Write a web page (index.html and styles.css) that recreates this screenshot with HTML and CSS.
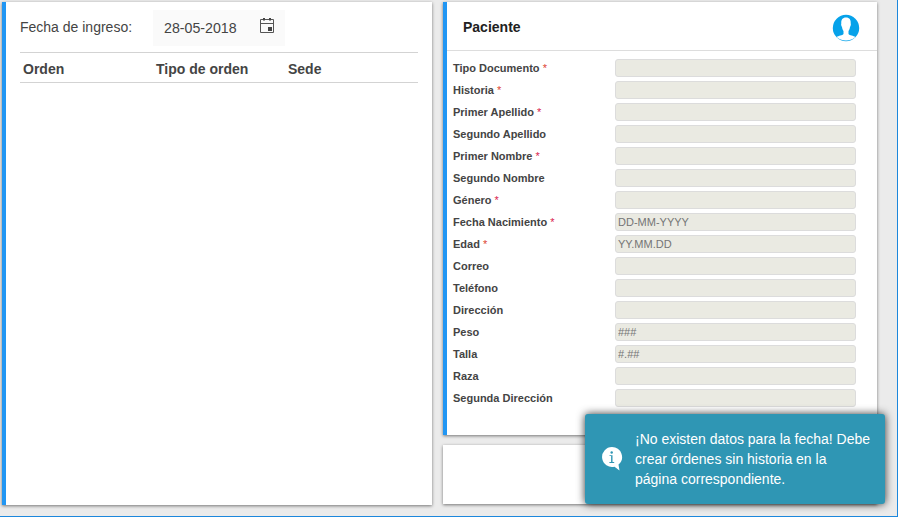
FILE: index.html
```html
<!DOCTYPE html>
<html lang="es">
<head>
<meta charset="utf-8">
<title>Ingreso de órdenes</title>
<link rel="stylesheet" href="styles.css">
</head>
<body>
<main class="app">
  <section class="card accent orders">
    <div class="filter">
      <span class="filter-label">Fecha de ingreso:</span>
      <div class="date">
        <span class="date-value">28-05-2018</span>
        <svg class="calendar" width="16" height="17" viewBox="0 0 16 17">
          <path d="M1.500 2.500h13v13h-13zM1 6.500h14" fill="none" stroke="#555" stroke-width="1"/>
          <path d="M4 1h2v2.500H4zM10 1h2v2.500h-2zM9 10h4v4H9z" fill="#444"/>
        </svg>
      </div>
    </div>
    <div class="table-head"><span>Orden</span><span>Tipo de orden</span><span>Sede</span></div>
  </section>
  <div class="side">
    <section class="card accent patient">
      <header class="patient-head">
        <h1>Paciente</h1>
        <svg width="28" height="28" viewBox="0 0 28 28">
          <circle cx="14" cy="14" r="13.200" fill="#06a2ea"/>
          <path d="M14 3.600C10.500 3.600 9 6 9.300 9.300C8.800 10.500 9.400 12.500 10 13C10.200 14.800 10.800 16 11.500 17V20C10.500 21.700 6.500 21.500 4.600 23C7 25.300 10 26.400 14 26.400S21 25.300 23.400 23C21.500 21.500 17.500 21.700 16.500 20V17C17.200 16 17.800 14.800 18 13C18.600 12.500 19.200 10.500 18.700 9.300C19 6 17.500 3.600 14 3.600Z" fill="#fff"/>
        </svg>
      </header>
      <div class="form">
        <div class="row"><label>Tipo Documento <i class="warm">*</i></label><input disabled></div>
        <div class="row"><label>Historia <i class="warm">*</i></label><input disabled></div>
        <div class="row"><label>Primer Apellido <i>*</i></label><input disabled></div>
        <div class="row"><label>Segundo Apellido</label><input disabled></div>
        <div class="row"><label>Primer Nombre <i>*</i></label><input disabled></div>
        <div class="row"><label>Segundo Nombre</label><input disabled></div>
        <div class="row"><label>Género <i>*</i></label><input disabled></div>
        <div class="row"><label>Fecha Nacimiento <i>*</i></label><input disabled placeholder="DD-MM-YYYY"></div>
        <div class="row"><label>Edad <i class="warm">*</i></label><input disabled placeholder="YY.MM.DD"></div>
        <div class="row"><label>Correo</label><input disabled></div>
        <div class="row"><label>Teléfono</label><input disabled></div>
        <div class="row"><label>Dirección</label><input disabled></div>
        <div class="row"><label>Peso</label><input disabled placeholder="###"></div>
        <div class="row"><label>Talla</label><input disabled placeholder="#.##"></div>
        <div class="row"><label>Raza</label><input disabled></div>
        <div class="row"><label>Segunda Dirección</label><input disabled></div>
      </div>
    </section>
    <section class="card actions"></section>
  </div>
  <div class="toast" role="status">
    <svg width="22" height="26" viewBox="0 0 22 26">
      <path d="M11 1a10 10 0 1 0 2.500 19.700L18.500 24.500 17.500 18.600A10 10 0 0 0 11 1z" fill="#fff"/>
      <circle cx="10.700" cy="6.500" r="1.200" fill="#2f96b4"/>
      <path d="M8.500 9.200h3v6.800h1.700v.9H8.400V16h1.700v-5.900H8.500z" fill="#2f96b4"/>
    </svg>
    <p>¡No existen datos para la fecha! Debe<br>crear órdenes sin historia en la<br>página correspondiente.</p>
  </div>
</main>
</body>
</html>
```
FILE: styles.css
```css
* { box-sizing: border-box; }

body {
  margin: 0;
  background: #fff;
  font-family: "Liberation Sans", Arial, sans-serif;
  color: #444;
}

.app {
  position: relative;
  display: flex;
  gap: 11px;
  width: 898px;
  height: 517px;
  padding: 2px 0 0 2px;
  background: #ebebeb;
  border: solid #1c87dc;
  border-width: 0 1px 1px 0;
}

.card {
  background: #fff;
  box-shadow: 0 1px 3px rgba(0, 0, 0, .5);
}

.accent { border-left: 4px solid #2196f3; }

.orders {
  width: 430px;
  height: 503px;
  padding: 8px 14px;
}

.filter {
  display: flex;
  align-items: center;
  height: 36px;
}

.filter-label {
  width: 133px;
  padding-bottom: 2px;
  font-size: 14px;
}

.date {
  display: flex;
  align-items: center;
  justify-content: space-between;
  width: 132px;
  height: 36px;
  padding: 0 10px 0 11px;
  background: #fafafa;
  font-size: 14.2px;
}

.calendar { margin-top: -5px; }

.table-head {
  display: grid;
  grid-template-columns: 133px 132px 1fr;
  height: 31px;
  margin-top: 6px;
  padding-left: 3px;
  border: solid #d3d3d3;
  border-width: 1px 0;
  font-size: 14px;
  font-weight: bold;
  line-height: 33px;
}

.side {
  display: flex;
  flex-direction: column;
  gap: 10px;
  width: 434px;
}

.patient { height: 433px; }

.patient-head {
  display: flex;
  align-items: center;
  justify-content: space-between;
  height: 49px;
  padding: 4px 17px 0 16px;
  border-bottom: 1px solid #ddd;
}

.patient-head h1 {
  margin: -3px 0 0;
  color: #212121;
  font-size: 14px;
}

.form {
  display: flex;
  flex-direction: column;
  gap: 4px;
  padding: 8px 21px 0 6px;
}

.row {
  display: flex;
  align-items: center;
  height: 18px;
}

.row label {
  width: 162px;
  font-size: 11px;
  font-weight: bold;
  line-height: 18px;
}

.row i {
  color: #d9214e;
  font-style: normal;
  font-weight: normal;
}

.row .warm { color: #dd4433; }

.row input {
  width: 241px;
  height: 18px;
  padding: 0 2px;
  border: 1px solid #dcdcdc;
  border-radius: 3px;
  background: #eaeae2;
  font: 11px "Liberation Sans", Arial, sans-serif;
}

.row input::placeholder { color: #757575; }

.actions { height: 59px; }

.toast {
  position: absolute;
  left: 585px;
  top: 414px;
  display: flex;
  align-items: center;
  width: 300px;
  height: 90px;
  padding-left: 16px;
  border-radius: 3px;
  background: #2f96b4;
  box-shadow: 0 0 8px rgba(0, 0, 0, .8);
  color: #fff;
}

.toast p {
  margin: 0 0 0 12px;
  font-size: 14px;
  line-height: 20px;
  white-space: nowrap;
}
```
